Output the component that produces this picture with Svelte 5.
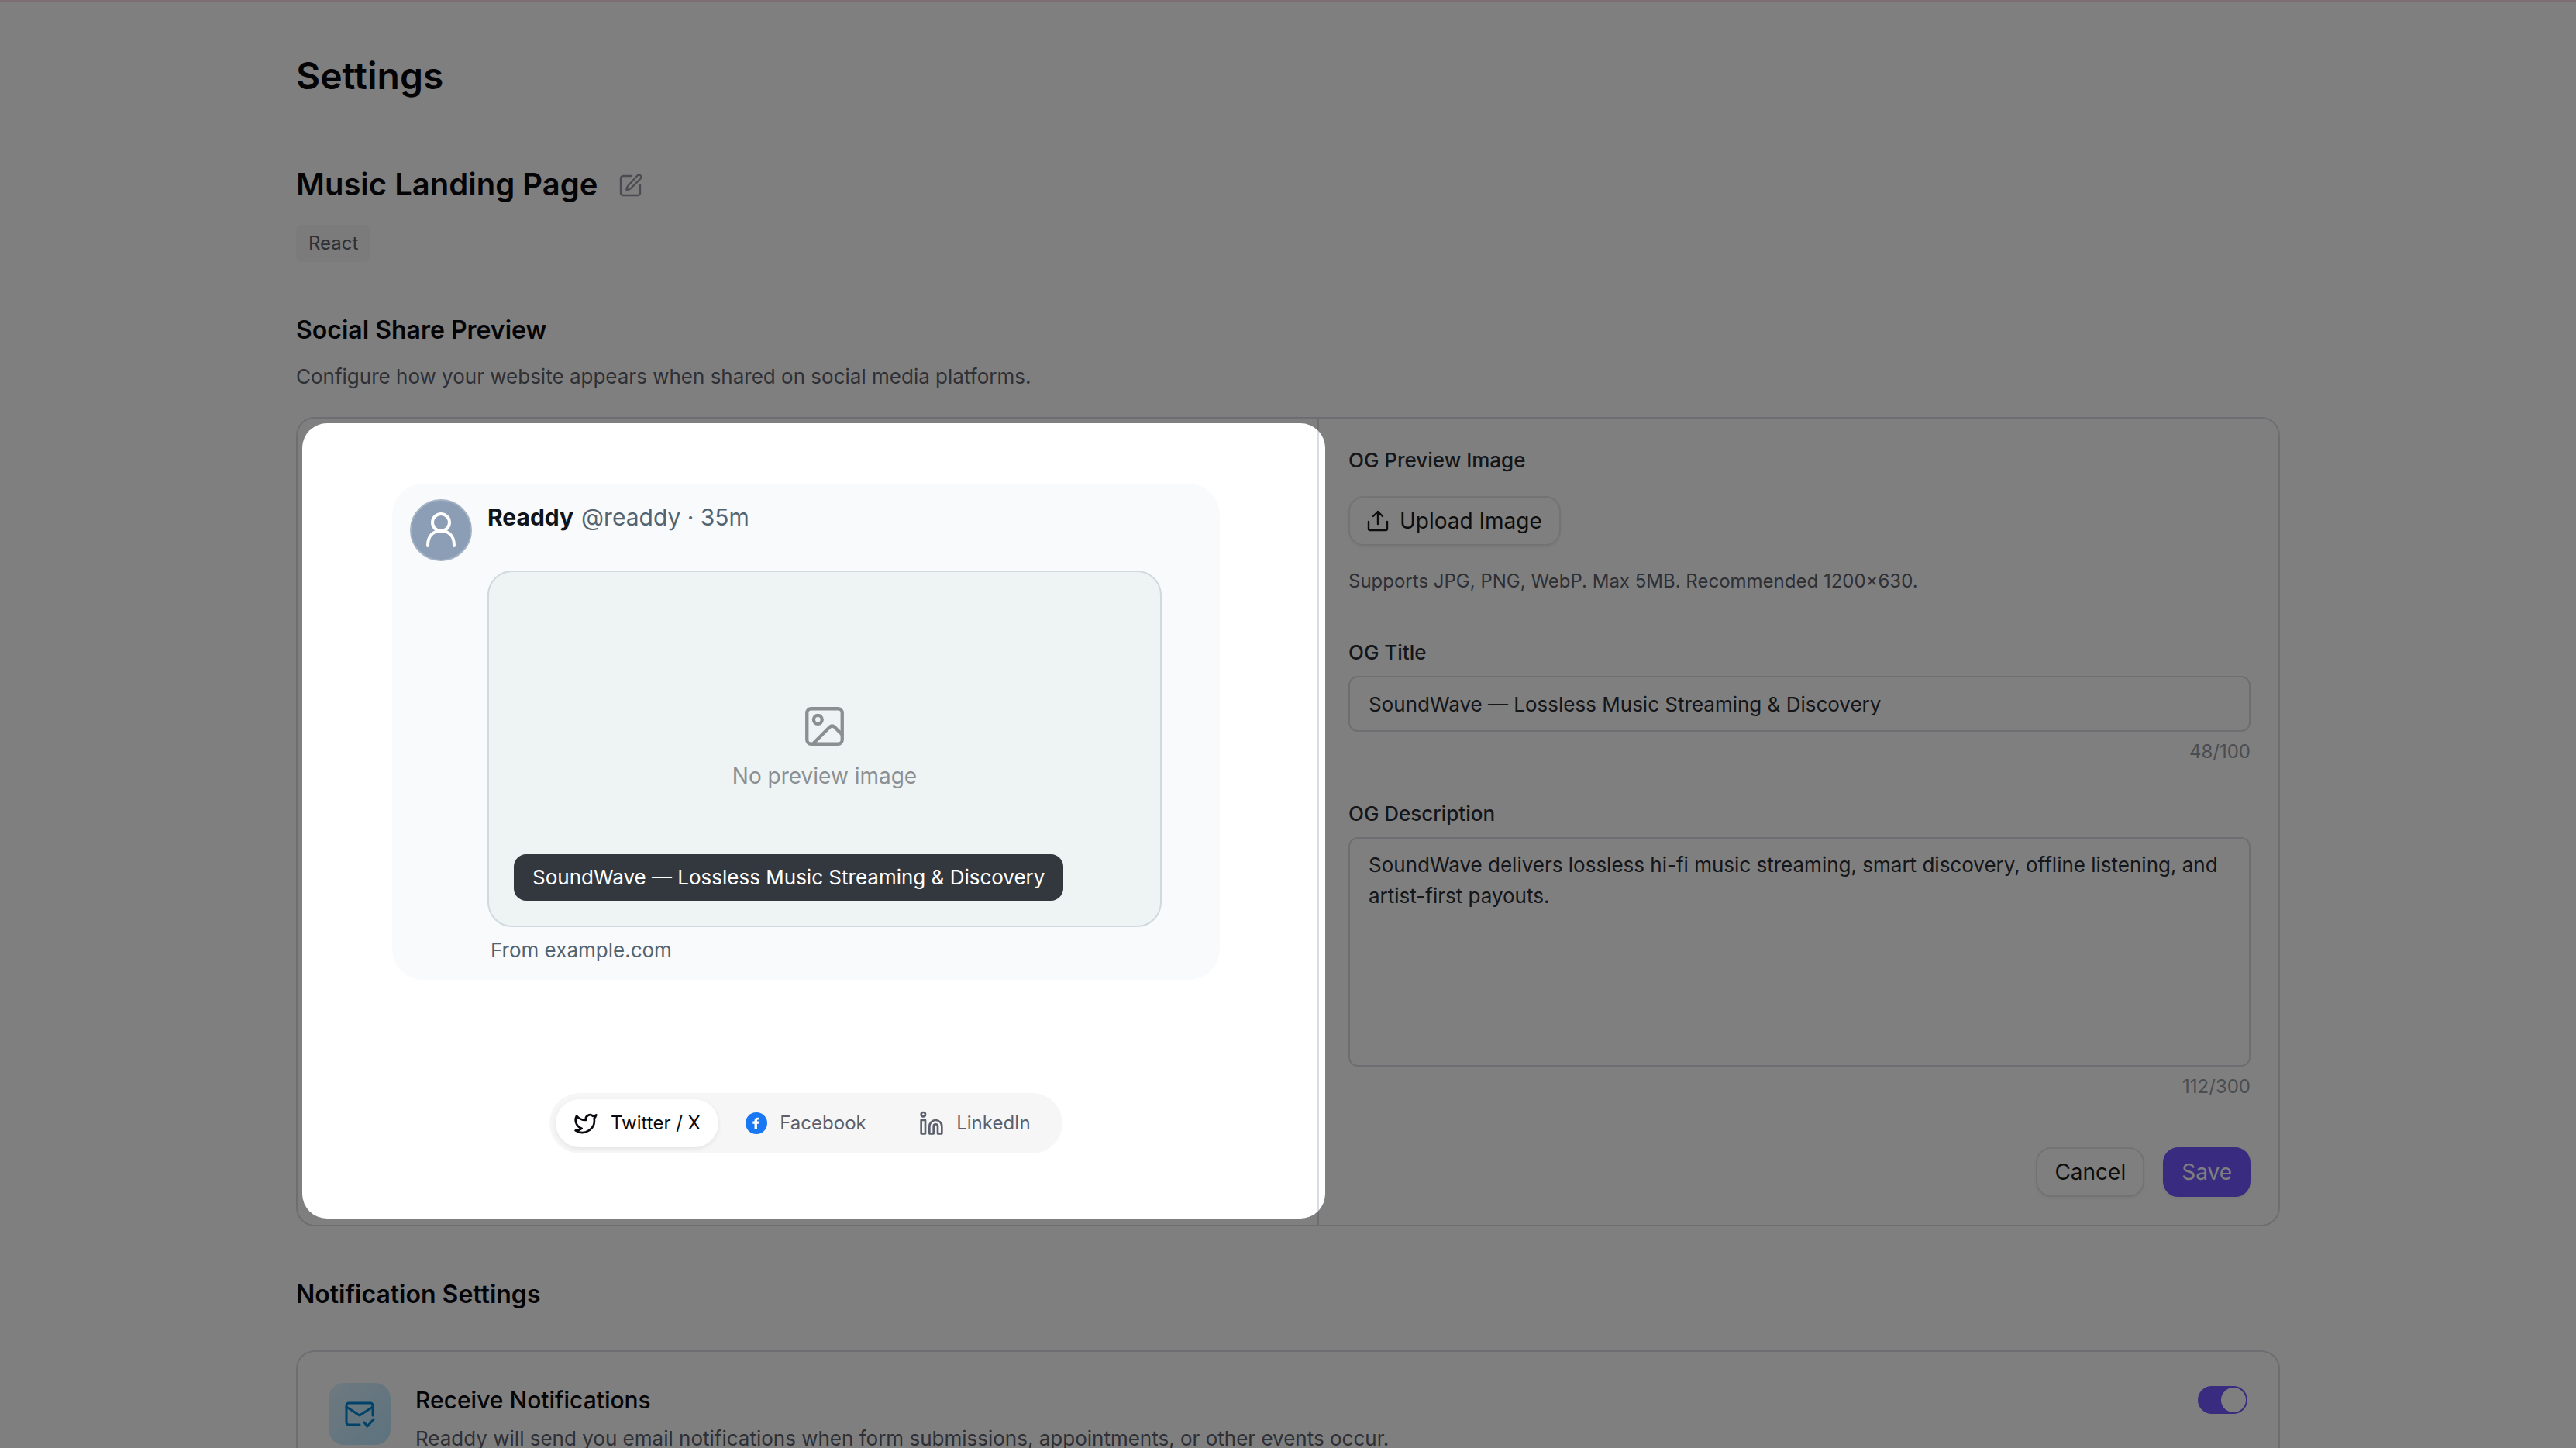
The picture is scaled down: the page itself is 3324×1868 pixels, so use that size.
<script>
  let title = $state('SoundWave — Lossless Music Streaming & Discovery');
  let description = $state(
    'SoundWave delivers lossless hi-fi music streaming, smart discovery, offline listening, and artist-first payouts.'
  );
  let platform = $state('twitter');
  let notify = $state(true);
</script>

<main class="page">
  <div class="top-line"></div>
  <div class="container">
    <h1>Settings</h1>

    <div class="project">
      <h2>Music Landing Page</h2>
      <button class="icon-button" aria-label="Rename project">
        <svg viewBox="0 0 32 32" aria-hidden="true">
          <path d="M17 5H7a3 3 0 0 0-3 3v19a3 3 0 0 0 3 3h19a3 3 0 0 0 3-3V17" />
          <path d="M25.500 4.500a2.800 2.800 0 0 1 4 4L17 21c-1.500 1.500-3.500 2-5.500 2 0-2 .5-4 2-5.500z" />
        </svg>
      </button>
    </div>
    <span class="tag">React</span>

    <h3>Social Share Preview</h3>
    <p class="section-text">Configure how your website appears when shared on social media platforms.</p>

    <section class="card share">
      <div class="preview-panel">
        <article class="post">
          <div class="avatar">
            <svg viewBox="0 0 40 48" aria-hidden="true">
              <circle cx="20" cy="14" r="11" />
              <path d="M3 44c0-13 7-19 17-19s17 6 17 19" />
            </svg>
          </div>
          <div class="post-body">
            <div class="post-head">
              <strong>Readdy</strong>
              <span>@readdy · 35m</span>
            </div>
            <div class="post-image">
              <svg viewBox="0 0 48 48" aria-hidden="true">
                <rect x="3" y="3" width="42" height="42" rx="5" />
                <circle cx="16" cy="16" r="5" />
                <path d="m10 45 20-20c2-2 4-2 6 0l9 9" />
              </svg>
              <span>No preview image</span>
              <div class="caption">{title}</div>
            </div>
            <div class="source">From example.com</div>
          </div>
        </article>

        <div class="tabs">
          <button class:active={platform === 'twitter'} onclick={() => (platform = 'twitter')}>
            <svg class="line" viewBox="0 0 24 24" aria-hidden="true">
              <path d="M22 4s-.7 2.100-2 3.400c1.600 10-9.400 17.300-18 11.600 2.200.1 4.400-.6 6-2C3 15.500.5 9.600 3 5c2.200 2.600 5.600 4.100 9 4-.9-4.200 4-6.600 7-3.800 1.100 0 3-1.200 3-1.200z" />
            </svg>
            Twitter / X
          </button>
          <button class:active={platform === 'facebook'} onclick={() => (platform = 'facebook')}>
            <svg viewBox="0 0 24 24" aria-hidden="true">
              <circle cx="12" cy="12" r="12" fill="#1877f2" />
              <path d="M9.900 18.200v-5.600H8V9.800h1.900V9c0-2.200 1.200-3.300 3.300-3.300.9 0 1.800.1 1.800.1v2.300h-1.100c-.8 0-1.100.4-1.100 1.100v.6H15l-.4 2.800h-1.800v5.600z" fill="#fff" />
            </svg>
            Facebook
          </button>
          <button class:active={platform === 'linkedin'} onclick={() => (platform = 'linkedin')}>
            <svg class="line" viewBox="0 0 24 24" aria-hidden="true">
              <circle cx="4" cy="3.500" r="2" />
              <path d="M2 9h4v13H2zM10 22v-7a6 6 0 0 1 12 0v7h-4v-7a2 2 0 0 0-4 0v7z" />
            </svg>
            LinkedIn
          </button>
        </div>
        <div class="spotlight"></div>
      </div>

      <form class="fields" onsubmit={(e) => e.preventDefault()}>
        <span class="label">OG Preview Image</span>
        <button type="button" class="button upload">
          <svg viewBox="0 0 28 28" aria-hidden="true">
            <path d="M14 18V2M8 8l6-6 6 6M2 15v9a2 2 0 0 0 2 2h20a2 2 0 0 0 2-2v-9" />
          </svg>
          Upload Image
        </button>
        <p class="hint">Supports JPG, PNG, WebP. Max 5MB. Recommended 1200×630.</p>

        <label class="label" for="og-title">OG Title</label>
        <input id="og-title" type="text" maxlength="100" bind:value={title} />
        <span class="counter">{title.length}/100</span>

        <label class="label" for="og-description">OG Description</label>
        <textarea id="og-description" maxlength="300" bind:value={description}></textarea>
        <span class="counter">{description.length}/300</span>

        <div class="actions">
          <button type="button" class="button">Cancel</button>
          <button type="submit" class="button primary">Save</button>
        </div>
      </form>
    </section>

    <h3>Notification Settings</h3>
    <section class="card notifications">
      <div class="mail">
        <svg viewBox="0 0 40 40" aria-hidden="true">
          <path d="M20 34H6a3 3 0 0 1-3-3V9a3 3 0 0 1 3-3h28a3 3 0 0 1 3 3v13" />
          <path d="m3 11 17 11 17-11" />
          <path d="m26 31 4 5 8-9" />
        </svg>
      </div>
      <div class="notification-text">
        <label for="notify">Receive Notifications</label>
        <p>Readdy will send you email notifications when form submissions, appointments, or other events occur.</p>
      </div>
      <input id="notify" class="toggle" type="checkbox" bind:checked={notify} />
    </section>
  </div>
</main>

<style>
  :global(body) {
    background: #fff;
  }

  .page,
  .page * {
    box-sizing: border-box;
  }

  .page {
    height: 100vh;
    overflow: hidden;
    color: #09090f;
    font-family: Inter, 'Liberation Sans', sans-serif;
    font-size: 26px;
    line-height: 40px;
  }

  .top-line {
    height: 2px;
    background: #ffdce3;
  }

  .container {
    max-width: 2560px;
    margin: 0 auto;
    padding-top: 64px;
  }

  h1,
  h2,
  h3,
  p {
    margin: 0;
    font-weight: 600;
  }

  h1 {
    font-size: 48px;
    line-height: 64px;
  }

  h2 {
    font-size: 40px;
    line-height: 56px;
  }

  h3 {
    margin-top: 64px;
    font-size: 32px;
    line-height: 48px;
  }

  p {
    color: #5c606c;
    font-weight: 400;
  }

  svg {
    flex: none;
    fill: none;
    stroke-linecap: round;
    stroke-linejoin: round;
  }

  button,
  input,
  textarea {
    font: inherit;
    color: inherit;
  }

  button {
    display: flex;
    align-items: center;
    justify-content: center;
    padding: 0;
    border: 0;
    background: none;
    cursor: pointer;
  }

  .project {
    display: flex;
    align-items: center;
    gap: 26px;
    margin-top: 80px;
  }

  .icon-button svg {
    width: 32px;
    height: 32px;
    stroke: #9699a3;
    stroke-width: 2.4;
  }

  .tag {
    display: block;
    width: fit-content;
    margin-top: 24px;
    padding: 0 16px;
    border-radius: 8px;
    background: #f7f7f7;
    color: #5c606c;
    font-size: 24px;
    line-height: 48px;
  }

  .section-text {
    margin-top: 16px;
  }

  .card {
    border: 2px solid #d8dce4;
    border-radius: 24px;
    background: #fff;
  }

  .share {
    display: grid;
    grid-template-columns: 1318fr 1238fr;
    margin-top: 32px;
  }

  .preview-panel {
    position: relative;
    display: flex;
    flex-direction: column;
    align-items: center;
    justify-content: space-between;
    padding: 84px 40px 92px 36px;
    border-right: 2px solid #d8dce4;
  }

  /* dims everything around the preview */
  .spotlight {
    position: absolute;
    inset: 6px -10px 8px 6px;
    z-index: 10;
    border-radius: 32px;
    box-shadow: 0 0 0 4000px rgba(0, 0, 0, 0.5);
    pointer-events: none;
  }

  .post {
    display: flex;
    gap: 20px;
    width: 100%;
    max-width: 1068px;
    padding: 20px 75px 18px 23px;
    border-radius: 40px;
    background: #f9fafc;
    color: #536471;
  }

  .avatar {
    display: flex;
    align-items: center;
    justify-content: center;
    flex: none;
    width: 80px;
    height: 80px;
    border: 2px solid #a3b2c4;
    border-radius: 50%;
    background: #8b9eb5;
  }

  .avatar svg {
    width: 40px;
    height: 48px;
    stroke: #fff;
    stroke-width: 4;
  }

  .post-body {
    flex: 1;
  }

  .post-head {
    display: flex;
    gap: 10px;
    font-size: 30px;
    line-height: 46px;
  }

  .post-head strong {
    color: #0f1419;
    font-weight: 700;
  }

  .post-image {
    position: relative;
    display: flex;
    flex-direction: column;
    align-items: center;
    justify-content: center;
    gap: 18px;
    height: 460px;
    margin-top: 46px;
    border: 2px solid #cfd9de;
    border-radius: 32px;
    background: #eef3f4;
    color: #8c8f92;
    font-size: 28px;
  }

  .post-image svg {
    width: 52px;
    height: 52px;
    stroke: #8c8f92;
    stroke-width: 4;
  }

  .caption {
    position: absolute;
    left: 32px;
    bottom: 32px;
    padding: 10px 24px;
    border-radius: 16px;
    background: #33383e;
    color: #fff;
    font-size: 26px;
  }

  .source {
    margin-top: 10px;
    padding-left: 4px;
  }

  .tabs {
    display: grid;
    grid-template-columns: repeat(3, 210px);
    gap: 8px;
    padding: 8px;
    border-radius: 40px;
    background: #f6f6f7;
  }

  .tabs button {
    gap: 16px;
    height: 62px;
    border-radius: 32px;
    color: #5c606c;
    font-size: 24px;
  }

  .tabs button.active {
    background: #fff;
    color: #09090f;
    box-shadow: 0 2px 6px rgba(0, 0, 0, 0.08);
  }

  .tabs svg {
    width: 28px;
    height: 28px;
  }

  .tabs .line {
    width: 32px;
    height: 32px;
    stroke: currentColor;
    stroke-width: 2;
  }

  .fields {
    display: flex;
    flex-direction: column;
    padding: 34px 36px 36px 38px;
  }

  .label {
    color: #2a2c35;
    font-weight: 500;
  }

  .button {
    height: 64px;
    padding: 0 22px;
    border: 2px solid #e6e6e9;
    border-radius: 20px;
    background: #fff;
    color: #1b1b1b;
    font-size: 28px;
    box-shadow: 0 2px 4px rgba(0, 0, 0, 0.06);
  }

  .primary {
    border-color: #7356ff;
    background: #7356ff;
    color: #fff;
  }

  .upload {
    align-self: flex-start;
    gap: 14px;
    margin-top: 26px;
  }

  .upload svg {
    width: 28px;
    height: 28px;
    stroke: currentColor;
    stroke-width: 2.4;
  }

  .hint {
    margin: 28px 0 54px;
    font-size: 24px;
    line-height: 36px;
  }

  .fields input,
  .fields textarea {
    display: block;
    width: 100%;
    margin: 10px 0 8px;
    border: 2px solid #d8dce4;
    border-radius: 12px;
    background: #fff;
    color: #2a2c35;
    outline: none;
  }

  .fields input {
    height: 72px;
    padding: 0 24px;
  }

  .fields textarea {
    height: 296px;
    padding: 14px 24px;
    resize: none;
  }

  .counter {
    align-self: flex-end;
    color: #9699a3;
    font-size: 24px;
    line-height: 36px;
  }

  .counter + .label {
    margin-top: 42px;
  }

  .actions {
    display: flex;
    justify-content: flex-end;
    gap: 24px;
    margin-top: 60px;
  }

  .notifications {
    display: flex;
    align-items: flex-start;
    gap: 32px;
    margin-top: 48px;
    padding: 40px;
  }

  .mail {
    display: flex;
    align-items: center;
    justify-content: center;
    width: 80px;
    height: 80px;
    border-radius: 20px;
    background: linear-gradient(135deg, #dff2fe, #b8e6fe);
  }

  .mail svg {
    width: 40px;
    height: 40px;
    stroke: #0084d1;
    stroke-width: 3;
  }

  .notification-text {
    flex: 1;
  }

  .notification-text label {
    font-size: 30px;
    font-weight: 500;
    line-height: 44px;
  }

  .notification-text p {
    margin-top: 8px;
  }

  .toggle {
    display: flex;
    width: 64px;
    height: 36px;
    margin: 4px 0 0;
    padding: 2px;
    border-radius: 18px;
    background: #d8dce4;
    appearance: none;
  }

  .toggle::before {
    content: '';
    width: 32px;
    height: 32px;
    border-radius: 50%;
    background: #fff;
  }

  .toggle:checked {
    justify-content: flex-end;
    background: #7356ff;
  }
</style>
